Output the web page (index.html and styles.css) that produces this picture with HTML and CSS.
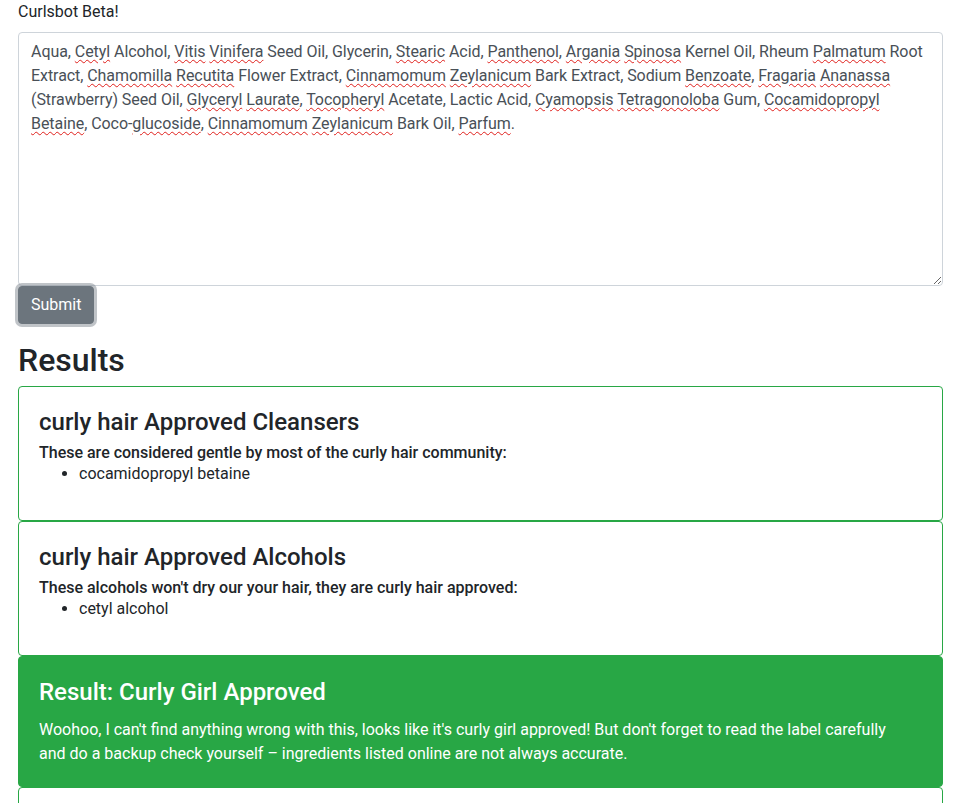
FILE: index.html
```html
<!DOCTYPE html>
<html lang="en">
<head>
  <meta charset="UTF-8"/>
  <meta name="viewport" content="width=device-width, initial-scale=1"/>
  <title>Curlsbot Beta</title>
  <link rel="stylesheet" href="styles.css">
</head>
<body>

  <div class="page">
    <form class="checker">
      <label for="ingredients">Curlsbot Beta!</label>
      <div id="ingredients" class="ingredients" contenteditable="true" role="textbox" aria-multiline="true">Aqua, <span class="typo">Cetyl</span> Alcohol, <span class="typo">Vitis</span> <span class="typo">Vinifera</span> Seed Oil, Glycerin, <span class="typo">Stearic</span> Acid, <span class="typo">Panthenol</span>, <span class="typo">Argania</span> <span class="typo">Spinosa</span> Kernel Oil, Rheum <span class="typo">Palmatum</span> Root Extract, <span class="typo">Chamomilla</span> <span class="typo">Recutita</span> Flower Extract, <span class="typo">Cinnamomum</span> <span class="typo">Zeylanicum</span> Bark Extract, Sodium <span class="typo">Benzoate</span>, <span class="typo">Fragaria</span> <span class="typo">Ananassa</span> (Strawberry) Seed Oil, <span class="typo">Glyceryl</span> <span class="typo">Laurate</span>, <span class="typo">Tocopheryl</span> Acetate, Lactic Acid, <span class="typo">Cyamopsis</span> <span class="typo">Tetragonoloba</span> Gum, <span class="typo">Cocamidopropyl</span> <span class="typo">Betaine</span>, Coco-<span class="typo">glucoside</span>, <span class="typo">Cinnamomum</span> <span class="typo">Zeylanicum</span> Bark Oil, <span class="typo">Parfum</span>.</div>
      <button type="button" class="btn">Submit</button>
    </form>

    <h2 class="results-title">Results</h2>

    <div class="card">
      <div class="card-body">
        <h4 class="card-title">curly hair Approved Cleansers</h4>
        <h6 class="card-subtitle">These are considered gentle by most of the curly hair community:</h6>
        <ul>
          <li>cocamidopropyl betaine</li>
        </ul>
      </div>
    </div>

    <div class="card">
      <div class="card-body">
        <h4 class="card-title">curly hair Approved Alcohols</h4>
        <h6 class="card-subtitle">These alcohols won't dry our your hair, they are curly hair approved:</h6>
        <ul>
          <li>cetyl alcohol</li>
        </ul>
      </div>
    </div>

    <div class="card card-success">
      <div class="card-body">
        <h4 class="card-title">Result: Curly Girl Approved</h4>
        <p class="card-text">Woohoo, I can't find anything wrong with this, looks like it's curly girl approved! But don't forget to read the label carefully and do a backup check yourself – ingredients listed online are not always accurate.</p>
      </div>
    </div>

    <div class="card">
      <div class="card-body">
        <h4 class="card-title">Ingredients</h4>
      </div>
    </div>
  </div>

</body>
</html>
```

FILE: styles.css
```css
/* --- Reset & Body --- */
* { box-sizing: border-box; }
html, body { margin: 0; padding: 0; }
body {
  font-family: Roboto, "Open Sans", sans-serif;
  font-size: 16px;
  line-height: 1.5;
  color: #212529;
  background: #fff;
}

.page { padding: 0 13px 0 18px; }

/* --- Form --- */
.checker label {
  display: inline-block;
  margin-bottom: 8px;
}

.ingredients {
  display: block;
  width: 100%;
  height: 254px;
  padding: 7px 12px 5px;
  color: #495057;
  letter-spacing: -0.06px;
  background: #fff;
  border: 1px solid #ced4da;
  border-radius: 4px;
  overflow: auto;
  resize: vertical;
  outline: none;
}
.typo {
  text-decoration: underline wavy #e0201c;
  text-decoration-thickness: 1px;
  text-underline-offset: 2px;
}

.btn {
  display: block;
  padding: 6px 12px;
  font-family: inherit;
  font-size: 16px;
  line-height: 1.5;
  color: #fff;
  background: #6c757d;
  border: 1px solid #6c757d;
  border-radius: 4px;
  box-shadow: 0 0 0 3px rgba(130,138,145,0.5);
  cursor: pointer;
}

/* --- Results --- */
.results-title {
  margin: 17px 0 7px;
  font-size: 32px;
  font-weight: 500;
  line-height: 1.2;
}

.card {
  border: 1px solid #28a745;
  border-radius: 4px;
  background: #fff;
}
.card-body { padding: 21px 20px 20px; }
.card-title {
  margin: 0 0 11px;
  font-size: 24px;
  font-weight: 500;
  line-height: 1.2;
}
.card-subtitle {
  margin: -5px 0 0;
  font-size: 16px;
  font-weight: 500;
  line-height: 1.2;
}
.card ul {
  margin: 0 0 14px;
  padding-left: 40px;
}
.card-text { margin: 0; }

.card-success {
  background: #28a745;
  color: #fff;
}
.card-success .card-text { max-width: 860px; }
```
